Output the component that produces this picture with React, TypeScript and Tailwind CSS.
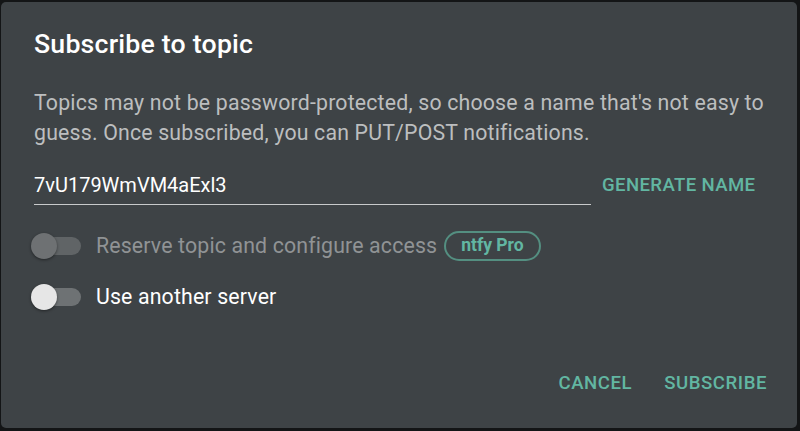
const teal = "text-[#62b6a2]";

function Toggle({ on, disabled }: { on?: boolean; disabled?: boolean }) {
  return (
    <div className="relative w-[50px] h-[26px] shrink-0">
      <div
        className={`absolute left-[5px] top-[4px] w-[45px] h-[18px] rounded-full ${
          disabled ? "bg-[#606466]" : "bg-[#6e7274]"
        }`}
      />
      <div
        className={`absolute top-0 w-[26px] h-[26px] rounded-full shadow-[0_1px_3px_rgba(0,0,0,0.45)] ${
          disabled ? "bg-[#6e7173]" : "bg-[#e6e6e6]"
        } ${on ? "left-[24px]" : "left-0"}`}
      />
    </div>
  );
}

export default function App() {
  return (
    <div
      className="w-[800px] h-[431px] bg-[#131516] pt-[2px] pl-[1px] pr-[3px] pb-[3px]"
      style={{ fontFamily: "Roboto, 'Liberation Sans', sans-serif" }}
    >
      <div className="h-full rounded-[5px] bg-[#3e4346] flex flex-col pl-[33px] pr-[32px]">
        <h2 className="mt-[22px] text-[26.7px] leading-[40px] font-medium tracking-[0.2px] text-white">
          Subscribe to topic
        </h2>

        <p className="mt-[24px] -mr-[20px] text-[21.3px] leading-[30px] tracking-[0.18px] text-[#bcbebf]">
          Topics may not be password-protected, so choose a name that's not easy to
          guess. Once subscribed, you can PUT/POST notifications.
        </p>

        <div className="mt-[22px] flex items-center">
          <div className="w-[557px] border-b border-[#c8cacb] pb-[4px] text-[20px] leading-[30px] text-white">
            7vU179WmVM4aExl3
          </div>
          <button
            className={`ml-[10px] -mt-[4px] px-[1px] text-[18.6px] font-medium uppercase tracking-[0.02em] ${teal}`}
          >
            Generate name
          </button>
        </div>

        <div className="mt-[15px] flex items-center h-[51px] -ml-[3px]">
          <Toggle disabled />
          <span className="ml-[15px] text-[21.3px] tracking-[0.15px] text-[#909395]">
            Reserve topic and configure access
          </span>
          <span
            className={`ml-[7px] h-[30px] px-[15px] flex items-center rounded-full border-2 border-[#548f81] text-[17.5px] font-bold ${teal}`}
          >
            ntfy Pro
          </span>
        </div>

        <div className="flex items-center h-[51px] -ml-[3px]">
          <Toggle />
          <span className="ml-[15px] text-[21.3px] tracking-[0.15px] text-white">
            Use another server
          </span>
        </div>

        <div className="mt-auto mb-[30px] flex justify-end gap-[32px] -mr-[2px]">
          <button className={`text-[18.6px] font-medium uppercase tracking-[0.03em] ${teal}`}>
            Cancel
          </button>
          <button className={`text-[18.6px] font-medium uppercase tracking-[0.03em] ${teal}`}>
            Subscribe
          </button>
        </div>
      </div>
    </div>
  );
}
